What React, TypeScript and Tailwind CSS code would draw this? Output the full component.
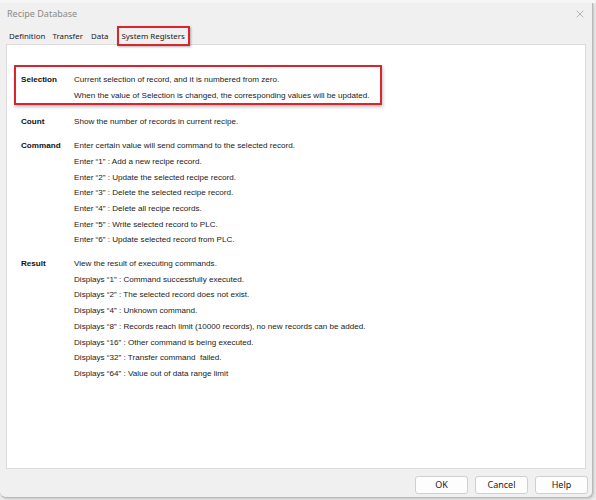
import { X } from "lucide-react";

const body = { fontFamily: '"Liberation Sans", Arial, sans-serif' };
const ui = { fontFamily: '"Noto Sans", "Open Sans", sans-serif' };

const sections = [
  {
    label: "Count",
    lines: ["Show the number of records in current recipe."],
  },
  {
    label: "Command",
    lines: [
      "Enter certain value will send command to the selected record.",
      "Enter \u201c1\u201d : Add a new recipe record.",
      "Enter \u201c2\u201d : Update the selected recipe record.",
      "Enter \u201c3\u201d : Delete the selected recipe record.",
      "Enter \u201c4\u201d : Delete all recipe records.",
      "Enter \u201c5\u201d : Write selected record to PLC.",
      "Enter \u201c6\u201d : Update selected record from PLC.",
    ],
  },
  {
    label: "Result",
    lines: [
      "View the result of executing commands.",
      "Displays \u201c1\u201d : Command successfully executed.",
      "Displays \u201c2\u201d : The selected record does not exist.",
      "Displays \u201c4\u201d : Unknown command.",
      "Displays \u201c8\u201d : Records reach limit (10000 records), no new records can be added.",
      "Displays \u201c16\u201d : Other command is being executed.",
      "Displays \u201c32\u201d : Transfer command  failed.",
      "Displays \u201c64\u201d : Value out of data range limit",
    ],
  },
];

function Row({ label, lines, boxed }: { label: string; lines: string[]; boxed?: boolean }) {
  return (
    <div
      className={
        boxed
          ? "flex w-[368px] border-2 border-[#d9252e] px-[5px] pt-[5px] shadow-[1px_2px_3px_rgba(0,0,0,0.25)]"
          : "flex border-2 border-transparent px-[5px]"
      }
    >
      <div className="w-[53px] shrink-0 font-bold text-[#111]">{label}</div>
      <div className="whitespace-pre text-[#222]">
        {lines.map((l) => (
          <div key={l}>{l}</div>
        ))}
      </div>
    </div>
  );
}

export default function App() {
  return (
    <div className="h-[500px] w-[596px] overflow-hidden bg-[#e9e9e9]">
      <div className="h-[3px] bg-[#f6f6f6]" />
      <div
        className="flex h-[495px] w-[593px] flex-col rounded-b-[6px] border-r border-b border-[#b9b9b9] bg-[#f0f0f0] shadow-[1px_1px_2px_rgba(0,0,0,0.15)]"
        style={ui}
      >
        {/* title bar */}
        <div className="flex h-[22px] items-center justify-between pl-[7px] pr-[6px]">
          <span className="text-[9px] text-[#8a8a8a]">Recipe Database</span>
          <X size={12} strokeWidth={1.2} className="text-[#888]" />
        </div>

        {/* tabs */}
        <div className="flex h-[21px] items-center pl-[9px] pt-[1px] text-[7.9px] text-[#1a1a1a]">
          <span className="pt-[2px]">Definition</span>
          <span className="ml-[7px] pt-[2px]">Transfer</span>
          <span className="ml-[8px] pt-[2px]">Data</span>
          <span className="relative z-10 ml-[8px] flex h-[20px] items-center border-2 border-[#d9252e] bg-[#f0f0f0] px-[3px] pt-[1px] shadow-[1px_1px_2px_rgba(0,0,0,0.3)]">
            System Registers
          </span>
        </div>

        {/* panel */}
        <div
          className="mx-[6px] -mt-[2px] h-[425px] border border-[#dcdcdc] bg-white pl-[7px] pt-[20px] text-[8.1px] leading-[15.7px]"
          style={body}
        >
          <Row
            boxed
            label="Selection"
            lines={[
              "Current selection of record, and it is numbered from zero.",
              "When the value of Selection is changed, the corresponding values will be updated.",
            ]}
          />
          <div className="mt-[7px] flex flex-col gap-[4px]">
            {sections.map((s) => (
              <Row key={s.label} label={s.label} lines={s.lines} />
            ))}
          </div>
        </div>

        {/* buttons */}
        <div className="flex justify-end gap-[7px] pr-[4px] pt-[7px] text-[9px] text-[#1a1a1a]">
          {["OK", "Cancel", "Help"].map((b) => (
            <button
              key={b}
              className="h-[18px] w-[53px] rounded-[3px] border border-[#d0d0d0] bg-[#fdfdfd]"
            >
              {b}
            </button>
          ))}
        </div>
      </div>
    </div>
  );
}
